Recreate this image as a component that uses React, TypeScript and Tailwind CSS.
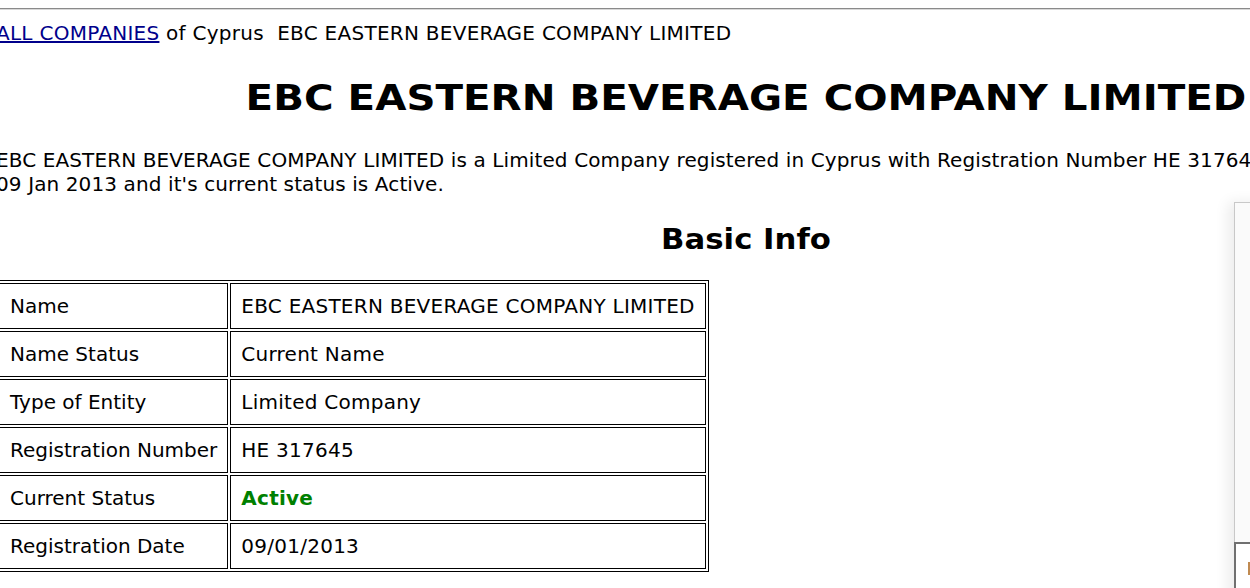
import React from "react";

const rows: [string, string, boolean?][] = [
  ["Name", "EBC EASTERN BEVERAGE COMPANY LIMITED"],
  ["Name Status", "Current Name"],
  ["Type of Entity", "Limited Company"],
  ["Registration Number", "HE 317645"],
  ["Current Status", "Active", true],
  ["Registration Date", "09/01/2013"],
];

export default function App() {
  return (
    <div className="relative w-[1250px] h-[588px] overflow-hidden bg-white text-black font-['DejaVu_Sans','Verdana',sans-serif]">
      <div className="pt-[8px]">
        <div className="h-[2px] w-full border-t border-t-[#8a8a8a] border-b border-b-[#d8d8d8]" />
      </div>
      <div className="w-[1500px] -ml-[4px] text-[20px] leading-[24px]">
        <div className="mt-[11px] whitespace-pre tracking-[0.27px]">
          <a href="#" className="text-[#00008b] underline">ALL COMPANIES</a>
          {" of Cyprus  EBC EASTERN BEVERAGE COMPANY LIMITED"}
        </div>
        <h1 className="mt-[32px] text-center text-[35px] leading-[42px] font-bold scale-x-[1.153]">
          EBC EASTERN BEVERAGE COMPANY LIMITED
        </h1>
        <p className="mt-[29px] tracking-[0.11px]">
          EBC EASTERN BEVERAGE COMPANY LIMITED is a Limited Company registered in Cyprus with Registration Number HE 317645 on
          <br />
          09 Jan 2013 and it's current status is Active.
        </p>
        <h2 className="mt-[27px] text-center text-[28px] leading-[34px] font-bold scale-x-[1.098]">Basic Info</h2>
        <table className="mt-[23px] border-separate border-spacing-[2px] border border-black">
          <tbody>
            {rows.map(([k, v, active]) => (
              <tr key={k}>
                <td className="border border-black px-[10px] py-[10px] whitespace-nowrap">{k}</td>
                <td
                  className={
                    "border border-black px-[10px] py-[10px] whitespace-nowrap tracking-[0.25px] " +
                    (active ? "text-[#008000] font-bold" : "")
                  }
                >
                  {v}
                </td>
              </tr>
            ))}
          </tbody>
        </table>
      </div>
      <div className="absolute left-[1234px] top-[202px] w-[40px] h-[400px] shadow-[-6px_0_14px_rgba(0,0,0,0.08)]">
        <div className="h-[340px] bg-[#fafafa] border-l border-t border-[#c8c8c8]" />
        <div className="h-[60px] bg-white border-l-2 border-t-2 border-[#707070] relative">
          <div className="absolute left-[12px] top-[18px] w-[2px] h-[13px] bg-[#c08a50]" />
        </div>
      </div>
    </div>
  );
}
